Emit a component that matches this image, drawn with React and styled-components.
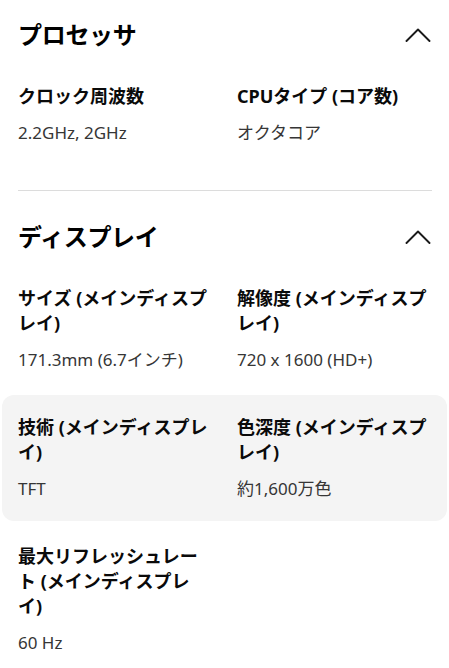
import React from "react";
import styled, { createGlobalStyle } from "styled-components";

const GlobalStyle = createGlobalStyle`
  html, body {
    margin: 0;
    padding: 0;
    background: #fff;
  }
  body {
    font-family: "Noto Sans", "Noto Sans CJK JP", sans-serif;
    color: #000;
    overflow: hidden;
  }
`;

const sections = [
  {
    title: "プロセッサ",
    rows: [
      [
        { label: "クロック周波数", value: "2.2GHz, 2GHz" },
        { label: "CPUタイプ (コア数)", value: "オクタコア" },
      ],
    ],
  },
  {
    title: "ディスプレイ",
    rows: [
      [
        { label: "サイズ (メインディスプレイ)", value: "171.3mm (6.7インチ)" },
        { label: "解像度 (メインディスプレイ)", value: "720 x 1600 (HD+)" },
      ],
      [
        { label: "技術 (メインディスプレイ)", value: "TFT" },
        { label: "色深度 (メインディスプレイ)", value: "約1,600万色" },
      ],
      [{ label: "最大リフレッシュレート (メインディスプレイ)", value: "60 Hz" }],
    ],
    highlight: 1,
  },
];

function Chevron() {
  return (
    <svg width="26" height="14" viewBox="0 0 26 14" fill="none">
      <path
        d="M1.5 13 L13 1.5 L24.5 13"
        stroke="#1a1a1a"
        strokeWidth="1.9"
        strokeLinecap="round"
        strokeLinejoin="round"
      />
    </svg>
  );
}

function App() {
  return (
    <>
      <GlobalStyle />
      <Page>
        {sections.map((section) => (
          <Section key={section.title}>
            <Header>
              <Title>{section.title}</Title>
              <Toggle>
                <Chevron />
              </Toggle>
            </Header>
            <Rows>
              {section.rows.map((row, i) => (
                <Row key={i} $active={section.highlight === i}>
                  {row.map((spec) => (
                    <Spec key={spec.label}>
                      <Label>{spec.label}</Label>
                      <Value>{spec.value}</Value>
                    </Spec>
                  ))}
                </Row>
              ))}
            </Rows>
          </Section>
        ))}
      </Page>
    </>
  );
}

export default App;

const Page = styled.div`
  width: 449px;
  display: flex;
  flex-direction: column;
`;

const Section = styled.section`
  padding-bottom: 25px;

  & + & {
    border-top: 1px solid #dcdcdc;
    margin: 0 17px 0 18px;
    padding-top: 11px;
  }

  & + & > * {
    margin-left: -18px;
    margin-right: -17px;
  }
`;

const Header = styled.div`
  display: flex;
  align-items: center;
  justify-content: space-between;
  padding: 19px 18px 13px 18px;
`;

const Title = styled.h2`
  margin: 0;
  font-size: 24px;
  line-height: 32px;
  font-weight: 700;
  letter-spacing: -0.3px;
`;

const Toggle = styled.span`
  display: flex;
`;

const Rows = styled.div`
  display: flex;
  flex-direction: column;
  gap: 3px;
  padding: 0 2px;
`;

const Row = styled.div`
  display: grid;
  grid-template-columns: 192px 192px;
  column-gap: 27px;
  padding: 20px 16px;
  border-radius: 12px;
  background: ${(p) => (p.$active ? "#f4f4f4" : "transparent")};
`;

const Spec = styled.div`
  display: flex;
  flex-direction: column;
`;

const Label = styled.div`
  font-size: 18px;
  line-height: 25px;
  font-weight: 700;
  color: #0a0a0a;
  margin-bottom: 12px;
  line-break: strict;
`;

const Value = styled.div`
  font-size: 17px;
  line-height: 24px;
  color: #363636;
`;
